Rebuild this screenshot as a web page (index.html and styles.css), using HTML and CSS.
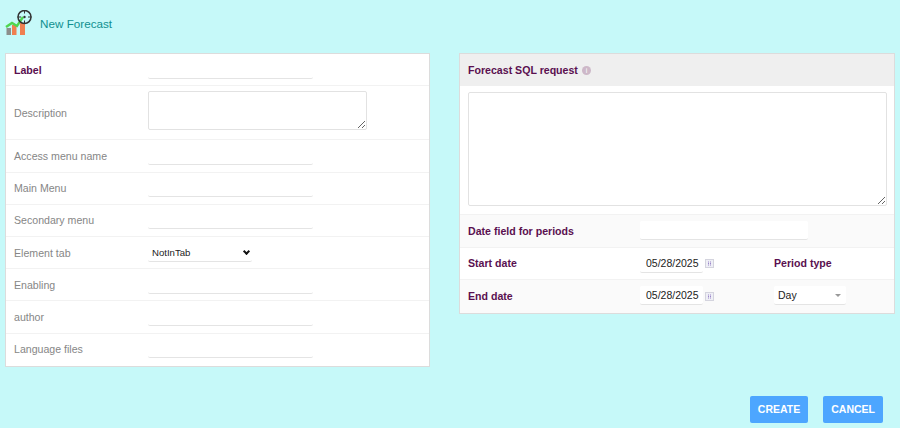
FILE: index.html
```html
<!DOCTYPE html>
<html lang="en">
<head>
  <meta charset="UTF-8">
  <meta name="viewport" content="width=device-width, initial-scale=1.0">
  <title>New Forecast</title>
  <link rel="stylesheet" href="styles.css">
</head>
<body>
  <header class="page-title">
    <svg class="page-icon" width="32" height="28" viewBox="0 0 32 28">
      <rect x="1.5" y="18" width="4.5" height="7" fill="#8c8f8c"/>
      <rect x="7" y="15" width="4.5" height="10" fill="#ef7f50"/>
      <rect x="15" y="13" width="5" height="12" fill="#ef7f50"/>
      <path d="M1 17 L7 13 L12 16 L18 7" fill="none" stroke="#4fd64f" stroke-width="2.4"/>
      <circle cx="19.5" cy="7" r="6.5" fill="none" stroke="#333" stroke-width="1.5"/>
      <path d="M19.5 0 V3.5 M19.5 10.5 V14 M12.5 7 H16 M23 7 H26.5" stroke="#333" stroke-width="1"/>
      <circle cx="19.5" cy="7" r="1.2" fill="#333"/>
    </svg>
    <h1>New Forecast</h1>
  </header>

  <main class="panels">
    <section class="panel panel-left">
      <div class="row">
        <label class="field-label required" for="label">Label</label>
        <input class="line-input" type="text" id="label">
      </div>
      <div class="row row-tall">
        <label class="field-label" for="description">Description</label>
        <textarea class="desc-input" id="description"></textarea>
      </div>
      <div class="row">
        <label class="field-label" for="accessMenu">Access menu name</label>
        <input class="line-input" type="text" id="accessMenu">
      </div>
      <div class="row">
        <label class="field-label" for="mainMenu">Main Menu</label>
        <input class="line-input" type="text" id="mainMenu">
      </div>
      <div class="row">
        <label class="field-label" for="secondaryMenu">Secondary menu</label>
        <input class="line-input" type="text" id="secondaryMenu">
      </div>
      <div class="row">
        <label class="field-label" for="elementTab">Element tab</label>
        <div class="tab-wrap">
          <select class="tab-select" id="elementTab">
            <option>NotInTab</option>
          </select>
        </div>
      </div>
      <div class="row">
        <label class="field-label" for="enabling">Enabling</label>
        <input class="line-input" type="text" id="enabling">
      </div>
      <div class="row">
        <label class="field-label" for="author">author</label>
        <input class="line-input" type="text" id="author">
      </div>
      <div class="row row-last">
        <label class="field-label" for="languageFiles">Language files</label>
        <input class="line-input" type="text" id="languageFiles">
      </div>
    </section>

    <section class="panel panel-right">
      <div class="sql-head">
        <span class="required">Forecast SQL request</span>
        <span class="info-dot">i</span>
      </div>
      <div class="sql-body">
        <textarea class="sql-input"></textarea>
      </div>
      <div class="date-row shaded">
        <label class="date-label required" for="dateField">Date field for periods</label>
        <input class="line-input period-field" type="text" id="dateField">
      </div>
      <div class="date-row">
        <label class="date-label required" for="startDate">Start date</label>
        <div class="date-cell">
          <input class="date-input" type="text" id="startDate" value="05/28/2025">
          <svg class="cal-icon" width="9" height="9" viewBox="0 0 9 9">
            <rect width="9" height="9" fill="#d4d4de"/>
            <rect x="1" y="1" width="7" height="7" fill="#efeff6"/>
            <path d="M3 3 H4 M5 3 H6 M3 4.5 H4 M5 4.5 H6 M3 6 H4 M5 6 H6" stroke="#9a86c8"/>
          </svg>
        </div>
        <span class="date-label period-label required">Period type</span>
      </div>
      <div class="date-row shaded row-last">
        <label class="date-label required" for="endDate">End date</label>
        <div class="date-cell">
          <input class="date-input" type="text" id="endDate" value="05/28/2025">
          <svg class="cal-icon" width="9" height="9" viewBox="0 0 9 9">
            <rect width="9" height="9" fill="#d4d4de"/>
            <rect x="1" y="1" width="7" height="7" fill="#efeff6"/>
            <path d="M3 3 H4 M5 3 H6 M3 4.5 H4 M5 4.5 H6 M3 6 H4 M5 6 H6" stroke="#9a86c8"/>
          </svg>
        </div>
        <div class="period-wrap">
          <select class="period-select">
            <option>Day</option>
          </select>
        </div>
      </div>
    </section>
  </main>

  <footer class="actions">
    <button class="btn" type="button">CREATE</button>
    <button class="btn" type="button">CANCEL</button>
  </footer>
</body>
</html>
```

FILE: styles.css
```css
body {
  font-family: "Liberation Sans", Arial, sans-serif;
  font-size: 10.6px;
  margin: 0;
  background-color: #c6f9f9;
}

.page-title {
  display: flex;
  align-items: flex-start;
  height: 53px;
  padding: 10px 0 0 5px;
  box-sizing: border-box;
}

.page-icon {
  flex: none;
}

.page-title h1 {
  margin: 7px 0 0 3px;
  font-size: 11.7px;
  font-weight: normal;
  line-height: 14px;
  color: #109090;
}

.panels {
  display: flex;
  align-items: flex-start;
  gap: 29px;
  padding-left: 5px;
}

.panel {
  background: white;
  border: 1px solid #dcdcdc;
}

.panel-left {
  width: 423px;
}

.panel-right {
  width: 434px;
}

.row {
  display: flex;
  align-items: center;
  height: 31.2px;
  padding-left: 8px;
  border-bottom: 1px solid #f2f2f2;
}

.row-tall {
  height: 53.2px;
}

.row-last {
  padding-bottom: 1.2px;
  border-bottom: none;
}

.field-label {
  width: 134px;
  flex: none;
  color: #868686;
}

.required {
  color: #5a1050;
  font-weight: bold;
}

.line-input {
  width: 159px;
  height: 17px;
  padding: 0 3px;
  border: none;
  border-bottom: 1px solid #e4e4e4;
  border-radius: 2px;
  background: white;
  font-size: 11px;
  outline: none;
}

.desc-input {
  width: 217px;
  height: 37px;
  margin-top: -4px;
  padding: 0;
  border: 1px solid #e2e2e2;
  border-radius: 2px;
  background: white;
  outline: none;
}

.tab-wrap {
  position: relative;
  width: 104px;
}

.tab-wrap::after {
  content: '';
  position: absolute;
  top: 5px;
  right: 3px;
  width: 3px;
  height: 3px;
  border-right: 2px solid #111;
  border-bottom: 2px solid #111;
  transform: rotate(45deg);
}

.tab-select {
  display: block;
  width: 104px;
  height: 18px;
  padding: 0 0 0 4px;
  border: none;
  border-bottom: 1px solid #e4e4e4;
  border-radius: 2px;
  background: white;
  color: #222;
  font-family: inherit;
  font-size: 9.6px;
  appearance: none;
  outline: none;
}

.sql-head {
  display: flex;
  align-items: center;
  gap: 4px;
  height: 32.25px;
  padding-left: 8px;
  background: #efefef;
}

.info-dot {
  width: 9px;
  height: 9px;
  border-radius: 50%;
  background: #cdb8c8;
  color: white;
  font-size: 7px;
  line-height: 9px;
  text-align: center;
}

.sql-body {
  display: flex;
  height: 129px;
  padding: 6px 0 0 8px;
  box-sizing: border-box;
  border-bottom: 1px solid #f2f2f2;
}

.sql-input {
  width: 417px;
  height: 112px;
  padding: 0;
  border: 1px solid #e2e2e2;
  border-radius: 2px;
  background: white;
  outline: none;
}

.date-row {
  display: flex;
  align-items: center;
  height: 31.25px;
  padding-left: 8px;
  border-bottom: 1px solid #f2f2f2;
  background: white;
}

.date-row.shaded {
  background: #fafafa;
}

.date-row.row-last {
  height: 32px;
  border-bottom: none;
}

.date-label {
  width: 172px;
  flex: none;
}

.period-label {
  width: 72px;
}

.period-field {
  width: 162px;
  height: 18px;
}

.date-cell {
  display: flex;
  align-items: center;
  gap: 2px;
  width: 134px;
  flex: none;
}

.date-input {
  width: 57px;
  height: 18px;
  padding: 0 0 0 6px;
  border: none;
  border-bottom: 1px solid #e4e4e4;
  border-radius: 2px;
  background: white;
  color: #222;
  font-family: inherit;
  font-size: 10.5px;
  outline: none;
}

.cal-icon {
  flex: none;
  margin-top: 1px;
}

.period-wrap {
  position: relative;
  width: 72px;
}

.period-wrap::after {
  content: '';
  position: absolute;
  top: 8px;
  right: 5px;
  border-left: 3px solid transparent;
  border-right: 3px solid transparent;
  border-top: 3px solid #999;
}

.period-select {
  display: block;
  width: 72px;
  height: 19px;
  padding: 0 0 0 4px;
  border: none;
  border-bottom: 1px solid #e4e4e4;
  border-radius: 2px;
  background: white;
  color: #222;
  font-family: inherit;
  font-size: 10.5px;
  appearance: none;
  outline: none;
}

.actions {
  display: flex;
  justify-content: flex-end;
  gap: 15px;
  margin-top: 29px;
  padding-right: 17px;
}

.btn {
  height: 27px;
  padding: 0 8px;
  border: none;
  border-radius: 2px;
  background: #4da6ff;
  color: white;
  font-family: inherit;
  font-size: 10.5px;
  font-weight: bold;
}
```
